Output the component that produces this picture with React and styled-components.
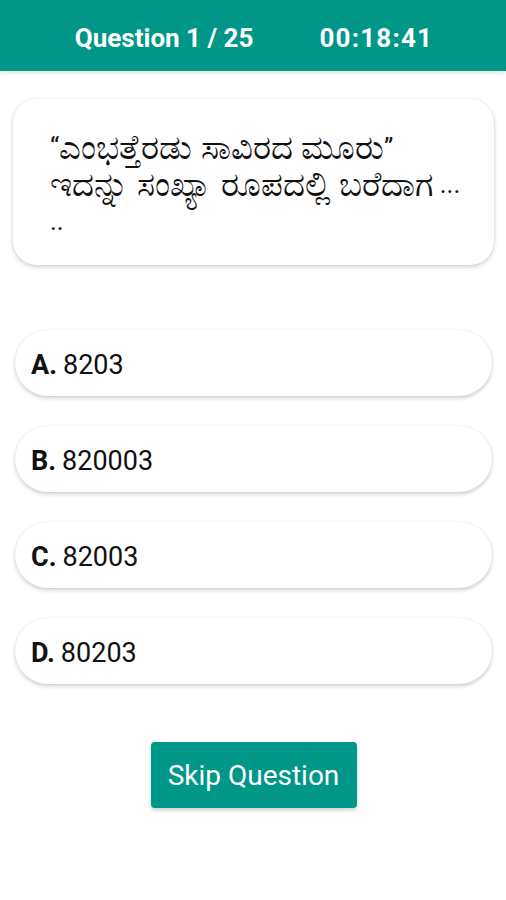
import styled, { createGlobalStyle } from "styled-components"

const GlobalStyle = createGlobalStyle`
  html, body {
    margin: 0;
    padding: 0;
    background: #ffffff;
    font-family: Roboto, "Noto Sans", "DejaVu Sans", sans-serif;
  }
`

const Screen = styled.div`
  width: 506px;
  min-height: 900px;
  display: flex;
  flex-direction: column;
  background: #ffffff;
`

const Header = styled.header`
  height: 71px;
  box-sizing: border-box;
  padding: 4px 0 0 2px;
  background: #009688;
  display: flex;
  align-items: center;
  justify-content: center;
  gap: 66px;
  box-shadow: 0 2px 4px rgba(0, 0, 0, 0.12);
  color: #ffffff;
  font-weight: 700;
  font-size: 26px;
`

const Timer = styled.span`
  letter-spacing: 1.2px;
`

const Content = styled.main`
  display: flex;
  flex-direction: column;
  padding: 28px 12px 0 13px;
`

const QuestionCard = styled.div`
  min-height: 166px;
  box-sizing: border-box;
  border-radius: 24px;
  background: #ffffff;
  box-shadow: 0 2px 5px rgba(0, 0, 0, 0.18), 0 0 2px rgba(0, 0, 0, 0.08);
  padding: 30px 22px 20px 37px;
  font-size: 26px;
  line-height: 37px;
  color: #111111;
`

const Kannada = styled.span`
  display: inline-block;
  font-size: 34px;
  line-height: 37px;
  height: 37px;
  vertical-align: bottom;
`

const Options = styled.div`
  display: flex;
  flex-direction: column;
  gap: 30px;
  margin-top: 65px;
  padding: 0 2px;
`

const Option = styled.div`
  height: 66px;
  box-sizing: border-box;
  border-radius: 33px;
  background: #ffffff;
  box-shadow: 0 2px 4px rgba(0, 0, 0, 0.2), 0 0 2px rgba(0, 0, 0, 0.06);
  display: flex;
  align-items: center;
  padding: 3px 16px 0;
  font-size: 27px;
  color: #111111;
  gap: 6px;
`

const Letter = styled.span`
  font-weight: 700;
`

const SkipButton = styled.button`
  align-self: center;
  margin-top: 58px;
  width: 206px;
  height: 66px;
  border: none;
  border-radius: 4px;
  background: #009688;
  color: #ffffff;
  font-family: Roboto, sans-serif;
  font-size: 28px;
  padding: 0;
  box-shadow: 0 2px 4px rgba(0, 0, 0, 0.2);
`

const options = [
  ["A.", "8203"],
  ["B.", "820003"],
  ["C.", "82003"],
  ["D.", "80203"],
]

export default function App() {
  return (
    <Screen>
      <GlobalStyle />
      <Header>
        <span>Question 1 / 25</span>
        <Timer>00:18:41</Timer>
      </Header>
      <Content>
        <QuestionCard>
          “<Kannada>ಎಂಭತ್ತೆರಡು ಸಾವಿರದ ಮೂರು</Kannada>”{" "}
          <Kannada>ಇದನ್ನು ಸಂಖ್ಯಾ ರೂಪದಲ್ಲಿ ಬರೆದಾಗ</Kannada> ... ..
        </QuestionCard>
        <Options>
          {options.map(([letter, value]) => (
            <Option key={letter}>
              <Letter>{letter}</Letter>
              {value}
            </Option>
          ))}
        </Options>
        <SkipButton>Skip Question</SkipButton>
      </Content>
    </Screen>
  )
}
